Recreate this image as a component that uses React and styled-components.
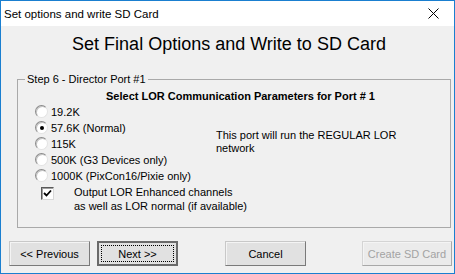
import React from "react";
import styled, { createGlobalStyle, css } from "styled-components";

const Global = createGlobalStyle`
  html, body { margin: 0; padding: 0; background: #ffffff; }
  body { font-family: "Liberation Sans", Arial, sans-serif; }
`;

const Window = styled.div`
  width: 455px;
  height: 274px;
  box-sizing: border-box;
  border: 1px solid #1a7fd0;
  display: flex;
  flex-direction: column;
  background: #f0f0f0;
  overflow: hidden;
`;

const TitleBar = styled.div`
  height: 25px;
  flex: none;
  background: #ffffff;
  display: flex;
  align-items: center;
  justify-content: space-between;
  padding: 0 0 0 3px;
  font-family: "Liberation Sans", Arial, sans-serif;
  font-size: 11.5px;
  color: #000;
`;

const CloseBox = styled.div`
  width: 46px;
  height: 25px;
  display: flex;
  align-items: center;
  justify-content: center;
  margin-right: -2px;
`;

const Body = styled.div`
  flex: 1;
  display: flex;
  flex-direction: column;
`;

const Heading = styled.h1`
  margin: 8px 0 0 3px;
  font-family: "Liberation Sans", Arial, sans-serif;
  font-weight: normal;
  font-size: 18px;
  line-height: 21px;
  text-align: center;
  color: #000;
`;

const Group = styled.fieldset`
  margin: 18px 0 0 16px;
  width: 434px;
  box-sizing: border-box;
  padding: 0 0 14px 0;
  border: 1px solid #a9a9a9;
  min-width: 0;
  font-size: 11px;
  color: #000;
`;

const Legend = styled.legend`
  margin-left: 7px;
  padding: 0 2px;
  font-size: 11px;
  line-height: 13px;
`;

const GroupTitle = styled.div`
  margin: 4px 0 0 88px;
  font-weight: bold;
  font-size: 11px;
  line-height: 13px;
`;

const Columns = styled.div`
  display: grid;
  grid-template-columns: 181px 1fr;
  margin: 1px 0 0 17px;
`;

const RadioList = styled.div`
  display: flex;
  flex-direction: column;
`;

const RadioRow = styled.label`
  display: flex;
  align-items: center;
  height: 16px;
  gap: 3px;
  font-size: 11px;
  line-height: 13px;
`;

const RadioCircle = styled.span`
  width: 13px;
  height: 13px;
  box-sizing: border-box;
  border-radius: 50%;
  background: #ffffff;
  border: 1px solid;
  border-color: #8a8a8a #e3e3e3 #e3e3e3 #8a8a8a;
  box-shadow: inset 1px 1px 0 #c4c4c4;
  display: flex;
  align-items: center;
  justify-content: center;
  margin-top: -1px;
  ${(p) =>
    p.$checked &&
    css`
      &::after {
        content: "";
        width: 4px;
        height: 4px;
        border-radius: 50%;
        background: #000;
      }
    `}
`;

const SideNote = styled.div`
  width: 200px;
  padding-top: 25px;
  font-size: 11px;
  line-height: 13px;
`;

const CheckRow = styled.label`
  display: flex;
  align-items: flex-start;
  margin: 1px 0 0 23px;
  gap: 20px;
  font-size: 11px;
  line-height: 14px;
`;

const CheckBox = styled.span`
  width: 13px;
  height: 13px;
  box-sizing: border-box;
  margin-top: 2px;
  background: #ffffff;
  border: 1px solid;
  border-color: #5a5a5a #d8d8d8 #d8d8d8 #5a5a5a;
  box-shadow: inset 1px 1px 0 #a0a0a0;
  display: flex;
  align-items: center;
  justify-content: center;
`;

const ButtonRow = styled.div`
  display: flex;
  margin: 13px 0 0 8px;
`;

const Button = styled.button`
  width: ${(p) => p.$w || 81}px;
  height: 25px;
  margin-left: ${(p) => p.$ml || 0}px;
  box-sizing: border-box;
  padding: 0;
  font-family: "Liberation Sans", Arial, sans-serif;
  font-size: 11px;
  color: #000;
  background: #e1e1e1;
  border: 1px solid;
  border-color: #c8c8c8 #7a7a7a #7a7a7a #c8c8c8;
  box-shadow: inset 1px 1px 0 #f4f4f4;
  display: flex;
  align-items: center;
  justify-content: center;
  ${(p) =>
    p.$default &&
    css`
      border: 2px solid #6a6a6a;
      box-shadow: none;
      padding: 2px;
    `}
  ${(p) =>
    p.disabled &&
    css`
      color: #a3a3a3;
      background: #ebebeb;
      border-color: #d4d4d4 #a8a8a8 #a8a8a8 #d4d4d4;
    `}
`;

const Focus = styled.span`
  flex: 1;
  align-self: stretch;
  border: 1px dotted #000;
  display: flex;
  align-items: center;
  justify-content: center;
`;

const rates = [
  "19.2K",
  "57.6K (Normal)",
  "115K",
  "500K (G3 Devices only)",
  "1000K (PixCon16/Pixie only)",
];

export default function App() {
  return (
    <>
      <Global />
      <Window>
        <TitleBar>
          <span>Set options and write SD Card</span>
          <CloseBox>
            <svg width="11" height="11" viewBox="0 0 11 11">
              <path d="M0.5 0.5 L10.5 10.5 M10.5 0.5 L0.5 10.5" stroke="#000" strokeWidth="1" />
            </svg>
          </CloseBox>
        </TitleBar>
        <Body>
          <Heading>Set Final Options and Write to SD Card</Heading>
          <Group>
            <Legend>Step 6 - Director Port #1</Legend>
            <GroupTitle>Select LOR Communication Parameters for Port # 1</GroupTitle>
            <Columns>
              <RadioList>
                {rates.map((r, i) => (
                  <RadioRow key={r}>
                    <RadioCircle $checked={i === 1} />
                    {r}
                  </RadioRow>
                ))}
              </RadioList>
              <SideNote>This port will run the REGULAR LOR network</SideNote>
            </Columns>
            <CheckRow>
              <CheckBox>
                <svg width="9" height="9" viewBox="0 0 9 9">
                  <path d="M1 4 L3.5 6.5 L8 1.5" stroke="#000" strokeWidth="1.8" fill="none" />
                </svg>
              </CheckBox>
              <span>
                Output LOR Enhanced channels
                <br />
                as well as LOR normal (if available)
              </span>
            </CheckRow>
          </Group>
          <ButtonRow>
            <Button>&lt;&lt; Previous</Button>
            <Button $default $ml={7}>
              <Focus>Next &gt;&gt;</Focus>
            </Button>
            <Button $ml={47}>Cancel</Button>
            <Button $ml={56} $w={90} disabled>
              Create SD Card
            </Button>
          </ButtonRow>
        </Body>
      </Window>
    </>
  );
}
